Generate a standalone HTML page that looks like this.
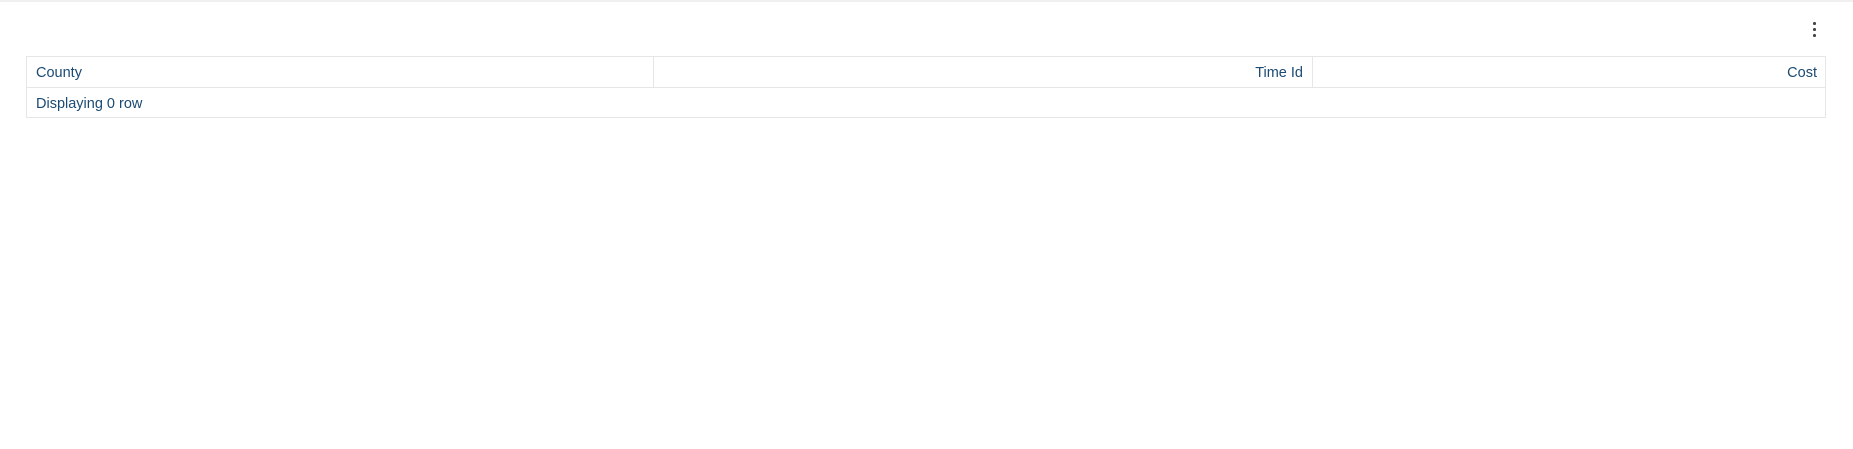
<!DOCTYPE html>
<html><head><style>
body{margin:0;width:1853px;height:449px;background:#fff;font-family:"Liberation Sans",sans-serif;position:relative;overflow:hidden}
.top{position:absolute;left:0;top:0;width:1853px;height:2px;background:#f0f0f0}
.dots{position:absolute;left:1813px;top:22px}
.dots i{display:block;width:2.5px;height:2.5px;background:#444;border-radius:50%;margin-bottom:3.5px}
.t{position:absolute;left:26px;top:56px;width:1800px;height:62px;border:1px solid #e6e6e6;box-sizing:border-box;color:#1b4a72;font-size:14.5px}
.h{position:absolute;top:0;height:31px;border-bottom:1px solid #e6e6e6;line-height:33px;box-sizing:border-box}
.r{position:absolute;top:31px;left:0;right:0;height:30px;line-height:32px;padding-left:9px}
</style></head><body>
<div class="top"></div>
<div class="dots"><i></i><i></i><i></i></div>
<div class="t">
<div class="h" style="left:0;width:627px;padding-left:9px;border-right:1px solid #e6e6e6">County</div>
<div class="h" style="left:627px;width:659px;text-align:right;padding-right:9px;border-right:1px solid #e6e6e6">Time Id</div>
<div class="h" style="left:1286px;right:0;text-align:right;padding-right:8px">Cost</div>
<div class="r">Displaying 0 row</div>
</div>
</body></html>
